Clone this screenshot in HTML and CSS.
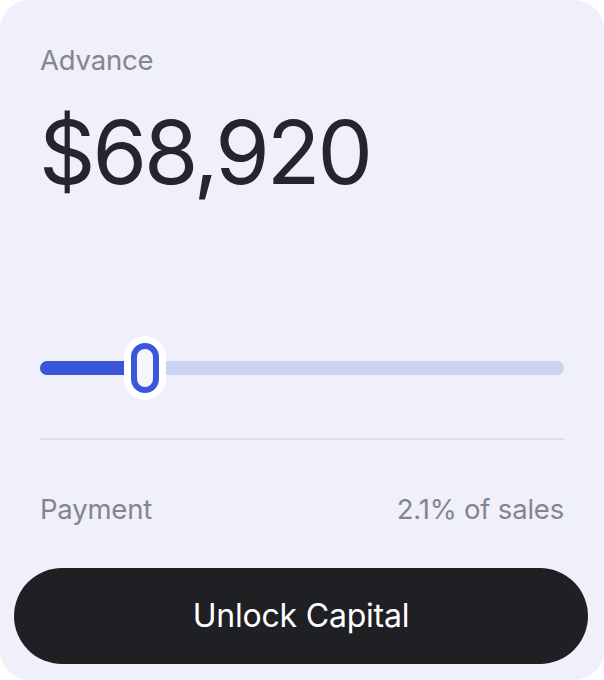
FILE: index.html
```html
<!DOCTYPE html>
<html>
<head>
<meta charset="utf-8">
<link rel="stylesheet" href="styles.css">
</head>
<body>
<div class="card">
  <div class="label">Advance</div>
  <div class="amount">$68,920</div>
  <div class="slider">
    <div class="track">
      <div class="fill"></div>
      <div class="thumb"><div class="knob"></div></div>
    </div>
  </div>
  <div class="divider"></div>
  <div class="row">
    <span>Payment</span>
    <span>2.1% of sales</span>
  </div>
  <button class="cta">Unlock Capital</button>
</div>
</body>
</html>
```

FILE: styles.css
```css
* { box-sizing: border-box; }
html, body { margin: 0; padding: 0; background: #ffffff; }
body { font-family: Inter, "Noto Sans", sans-serif; }
.card {
  width: 604px;
  height: 680px;
  background: #eff0fa;
  border-radius: 30px;
  padding: 44px 40px 0 40px;
  display: flex;
  flex-direction: column;
}
.label {
  font-size: 27.5px;
  line-height: 32px;
  color: #84858f;
  letter-spacing: -0.2px;
}
.amount {
  margin-top: 26px;
  font-size: 88px;
  line-height: 100px;
  color: #24252d;
  letter-spacing: -3px;
  margin-left: -1px;
}
.slider {
  margin-top: 134px;
  height: 64px;
  display: flex;
  align-items: center;
}
.track {
  position: relative;
  width: 100%;
  height: 14px;
  border-radius: 7px;
  background: #ccd3f3;
}
.fill {
  width: 100px;
  height: 100%;
  border-radius: 7px;
  background: #3a57d9;
}
.thumb {
  position: absolute;
  left: 84px;
  top: -25px;
  width: 42px;
  height: 64px;
  border-radius: 21px;
  background: #ffffff;
  padding: 7px;
}
.knob {
  width: 28px;
  height: 50px;
  border-radius: 14px;
  border: 6px solid #3a57d9;
  background: #f5f6fc;
}
.divider {
  margin-top: 38px;
  height: 2px;
  background: #dddde5;
}
.row {
  margin-top: 53px;
  display: flex;
  justify-content: space-between;
  font-size: 27.5px;
  line-height: 32px;
  color: #84858f;
  letter-spacing: -0.2px;
}
.cta {
  margin: 43px -24px 0 -26px;
  height: 96px;
  border: none;
  border-radius: 48px;
  background: #1f2024;
  color: #ffffff;
  font-family: Inter, "Noto Sans", sans-serif;
  font-size: 32px;
  letter-spacing: -0.2px;
  padding-bottom: 2px;
}
```
